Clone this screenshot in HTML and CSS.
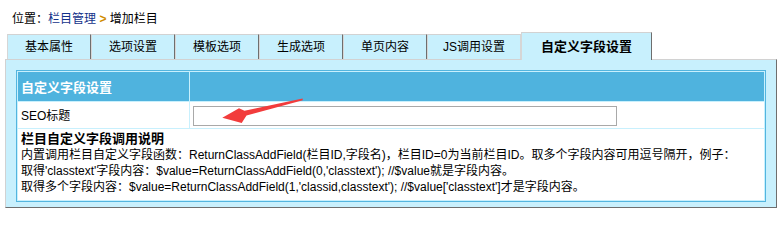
FILE: index.html
```html
<!DOCTYPE html>
<html lang="zh-CN">
<head>
<meta charset="utf-8">
<title>增加栏目</title>
<link rel="stylesheet" href="styles.css">
</head>
<body>
<div class="crumb">位置：<a class="crumb-link" href="#">栏目管理</a> <span class="crumb-sep">&gt;</span> 增加栏目</div>
<div class="tabs">
  <div class="tab">基本属性</div>
  <div class="tab">选项设置</div>
  <div class="tab">模板选项</div>
  <div class="tab">生成选项</div>
  <div class="tab">单页内容</div>
  <div class="tab tab-js">JS调用设置</div>
  <div class="tab tab-active">自定义字段设置</div>
</div>
<div class="panel">
  <div class="form">
    <div class="cell head">自定义字段设置</div>
    <div class="cell head"></div>
    <div class="cell label">SEO标题</div>
    <div class="cell field"><input class="text-input" type="text"></div>
    <div class="cell notes">
      <div class="notes-title">栏目自定义字段调用说明</div>
      <div>内置调用栏目自定义字段函数：ReturnClassAddField(栏目ID,字段名)，栏目ID=0为当前栏目ID。取多个字段内容可用逗号隔开，例子：</div>
      <div>取得'classtext'字段内容：$value=ReturnClassAddField(0,'classtext'); //$value就是字段内容。</div>
      <div>取得多个字段内容：$value=ReturnClassAddField(1,'classid,classtext'); //$value['classtext']才是字段内容。</div>
    </div>
  </div>
</div>
<svg class="arrow" width="95" height="32" viewBox="0 0 95 32" aria-hidden="true">
  <polygon points="7.3,22.7 24,13.3 29.5,15.8 87.6,3.6 87.8,5.2 31.5,20.6 26.7,28" fill="#f23c3c"/>
</svg>
</body>
</html>
```
FILE: styles.css
```css
* { box-sizing: border-box; }

html, body {
  margin: 0;
  padding: 0;
  background: #ffffff;
}

body {
  width: 779px;
  font-family: "Liberation Sans", "Noto Sans CJK SC", sans-serif;
  font-size: 12px;
  line-height: 16px;
  color: #000;
}

.crumb {
  padding: 11px 0 5px 12px;
  height: 32px;
  line-height: 16px;
  color: #000;
}

.crumb-link {
  color: #13328a;
  text-decoration: none;
}

.crumb-sep {
  color: #d08a00;
  font-weight: bold;
}

.tabs {
  display: flex;
  align-items: flex-end;
  margin-left: 7px;
  height: 27px;
}

.tab {
  height: 25px;
  line-height: 24px;
  padding: 0 17px;
  background: #c8f0fd;
  border-top: 1px solid #d2d2d2;
  border-left: 1px solid #d6d6d6;
  border-right: 1px solid #6e6e6e;
  white-space: nowrap;
}

.tab-js {
  padding: 0 15px;
  border-right-color: #d6d6d6;
}

.tab-active {
  position: relative;
  z-index: 1;
  height: 28px;
  line-height: 27px;
  margin-bottom: -1px;
  padding: 0 19px;
  font-size: 13px;
  font-weight: bold;
}

.panel {
  margin-left: 5px;
  width: 772px;
  padding: 10px 10px 5px 10px;
  background: #c8f0fd;
  border-top: 1px solid #d2d2d2;
  border-left: 1px solid #d2d2d2;
  border-right: 1px solid #6e6e6e;
  border-bottom: 1px solid #6e6e6e;
}

.form {
  display: grid;
  grid-template-columns: 171px 1fr;
  gap: 1px;
  padding: 1px;
  background: #c8f0fd;
  border: 1px solid #53b5df;
}

.cell {
  background: #ffffff;
}

.head {
  height: 29px;
  padding: 4px 3px 2px 3px;
  line-height: 23px;
  background: #4fb3de;
  color: #ffffff;
  font-size: 13px;
  font-weight: bold;
}

.label {
  height: 26px;
  padding: 4px 3px 2px 3px;
  line-height: 20px;
}

.field {
  height: 26px;
  padding: 4px 3px 2px 3px;
}

.text-input {
  display: block;
  width: 424px;
  height: 20px;
  margin: 0;
  padding: 0 2px;
  border: 1px solid #a9a9a9;
  background: #fff;
  font: inherit;
}

.notes {
  grid-column: 1 / -1;
  height: 71px;
  padding: 2px 3px 5px 3px;
  line-height: 16px;
  white-space: nowrap;
}

.notes-title {
  font-size: 13px;
  font-weight: bold;
}

.arrow {
  position: absolute;
  left: 215px;
  top: 95px;
}
```
